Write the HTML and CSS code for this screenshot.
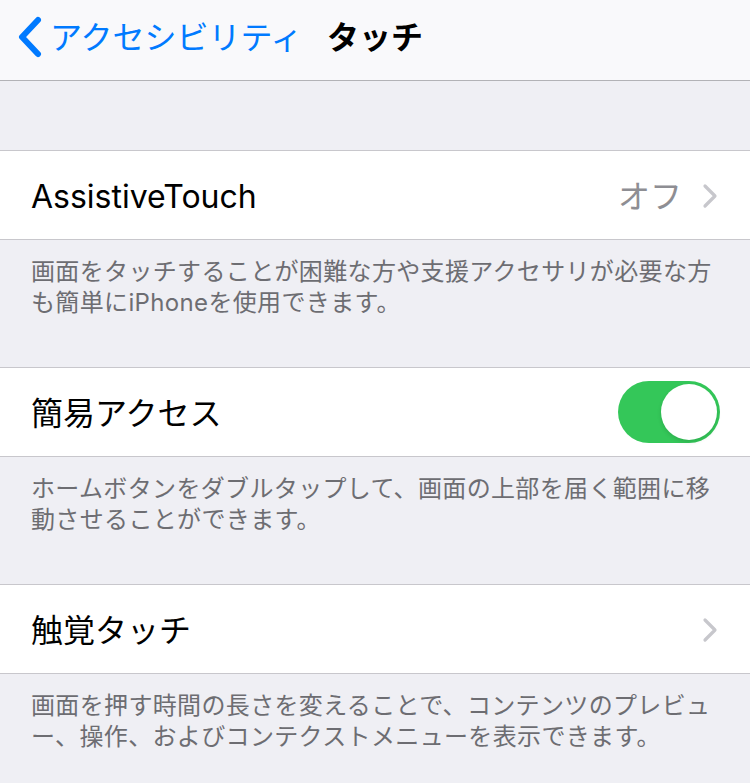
FILE: index.html
```html
<!DOCTYPE html>
<html lang="ja">

<head>
    <meta charset="UTF-8">
    <meta name="viewport" content="width=device-width, initial-scale=1.0">
    <title>タッチ</title>
    <link rel="stylesheet" href="styles.css">
</head>

<body>
    <header class="nav-bar">
        <a class="back-link" href="#">
            <svg class="back-chevron" width="26" height="42" viewBox="0 0 26 42">
                <path d="M22 4 L6 21 L22 38" fill="none" stroke="#007aff" stroke-width="6" stroke-linecap="round" stroke-linejoin="round" />
            </svg>
            <span>アクセシビリティ</span>
        </a>
        <h1 class="nav-title">タッチ</h1>
    </header>

    <main class="settings">
        <div class="top-gap"></div>

        <!-- AssistiveTouch -->
        <div class="cell">
            <span class="cell-label">AssistiveTouch</span>
            <span class="cell-value">オフ</span>
            <svg class="disclosure" width="16" height="26" viewBox="0 0 16 26">
                <path d="M3 3 L13 13 L3 23" fill="none" stroke="#c7c7cc" stroke-width="3.2" stroke-linecap="round" stroke-linejoin="round" />
            </svg>
        </div>
        <p class="group-footer">画面をタッチすることが困難な方や支援アクセサリが必要な方も簡単にiPhoneを使用できます。</p>

        <!-- 簡易アクセス -->
        <div class="cell">
            <span class="cell-label">簡易アクセス</span>
            <span class="switch is-on"><span class="knob"></span></span>
        </div>
        <p class="group-footer">ホームボタンをダブルタップして、画面の上部を届く範囲に移動させることができます。</p>

        <!-- 触覚タッチ -->
        <div class="cell">
            <span class="cell-label">触覚タッチ</span>
            <svg class="disclosure" width="16" height="26" viewBox="0 0 16 26">
                <path d="M3 3 L13 13 L3 23" fill="none" stroke="#c7c7cc" stroke-width="3.2" stroke-linecap="round" stroke-linejoin="round" />
            </svg>
        </div>
        <p class="group-footer">画面を押す時間の長さを変えることで、コンテンツのプレビュー、操作、およびコンテクストメニューを表示できます。</p>
    </main>
</body>

</html>
```

FILE: styles.css
```css
body {
    font-family: Inter, "Noto Sans CJK JP", sans-serif;
    margin: 0;
    padding: 0;
    background-color: #efeff4;
    color: #000;
}

.nav-bar {
    position: relative;
    height: 80px;
    background-color: #f9f9fb;
    border-bottom: 1px solid #b2b2b6;
    display: flex;
    align-items: center;
    justify-content: center;
}

.back-link {
    position: absolute;
    left: 16px;
    top: 14px;
    display: flex;
    align-items: center;
    gap: 8px;
    color: #007aff;
    text-decoration: none;
    font-size: 32px;
    line-height: 44px;
}

.back-link span {
    margin-top: 2px;
}

.back-chevron {
    display: block;
}

.nav-title {
    margin: 0;
    font-size: 32px;
    font-weight: 700;
    line-height: 44px;
    margin-top: -4px;
}

.top-gap {
    height: 69px;
}

.cell {
    display: flex;
    align-items: center;
    height: 88px;
    padding: 0 32px 0 31px;
    background-color: #fff;
    border-top: 1px solid #c8c7cc;
    border-bottom: 1px solid #c8c7cc;
    font-size: 32px;
}

.cell-label {
    flex: 1;
    line-height: 40px;
    margin-top: 4px;
}

.cell-value {
    color: #8e8e93;
    margin-right: 20px;
    line-height: 40px;
    margin-top: 4px;
}

.disclosure {
    display: block;
    margin-top: 2px;
}

.switch {
    width: 102px;
    height: 62px;
    border-radius: 31px;
    background-color: #34c759;
    position: relative;
    margin-right: -2px;
}

.knob {
    position: absolute;
    top: 3px;
    right: 3px;
    width: 56px;
    height: 56px;
    border-radius: 50%;
    background-color: #fff;
    box-shadow: 0 2px 4px rgba(0, 0, 0, 0.12);
}

.group-footer {
    margin: 0;
    padding: 16px 28px 49px 31px;
    font-size: 24px;
    letter-spacing: 0.35px;
    line-height: 31px;
    color: #6d6d72;
    line-break: normal;
}
```
